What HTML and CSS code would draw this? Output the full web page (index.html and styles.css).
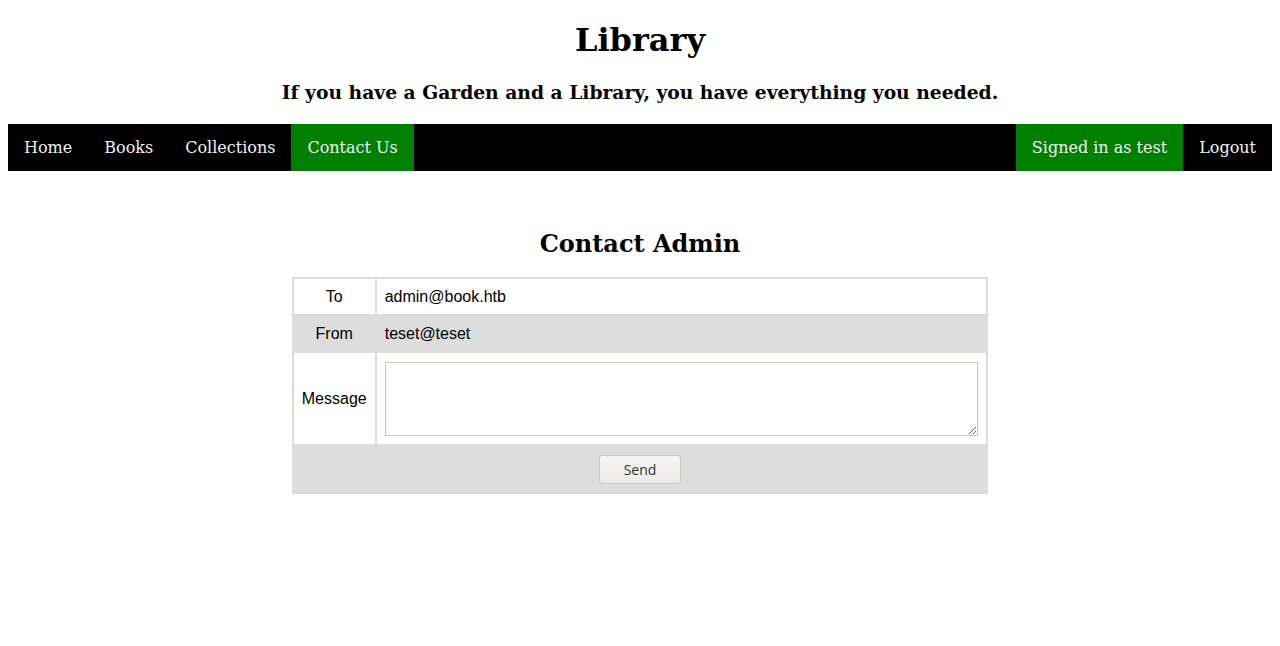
FILE: index.html
```html
<!DOCTYPE html>
<html>
<head>
<meta charset="utf-8">
<title>Library</title>
<link rel="stylesheet" href="styles.css">
</head>
<body>
<header class="masthead">
  <h1 class="title">Library</h1>
  <h3 class="tagline">If you have a Garden and a Library, you have everything you needed.</h3>
</header>
<nav class="topnav">
  <div class="nav-left">
    <a class="nav-link" href="#">Home</a>
    <a class="nav-link" href="#">Books</a>
    <a class="nav-link" href="#">Collections</a>
    <a class="nav-link active" href="#">Contact Us</a>
  </div>
  <div class="nav-right">
    <a class="nav-link active" href="#">Signed in as test</a>
    <a class="nav-link" href="#">Logout</a>
  </div>
</nav>
<main class="content">
  <h2 class="section-title">Contact Admin</h2>
  <form class="contact-form">
    <table class="contact-table">
      <tr>
        <td class="label">To</td>
        <td class="value">admin@book.htb</td>
      </tr>
      <tr class="shaded">
        <td class="label">From</td>
        <td class="value">teset@teset</td>
      </tr>
      <tr>
        <td class="label">Message</td>
        <td class="value"><textarea class="message"></textarea></td>
      </tr>
      <tr class="shaded">
        <td class="actions" colspan="2"><button class="send" type="button">Send</button></td>
      </tr>
    </table>
  </form>
</main>
</body>
</html>
```
FILE: styles.css
```css
body {
  margin: 0 8px 8px;
  font-family: "DejaVu Serif", serif;
  background: #fff;
  color: #000;
}

.masthead {
  text-align: center;
  padding-top: 1px;
}

.title {
  font-size: 32px;
  margin: 20.44px 0 21.44px;
}

.tagline {
  font-size: 18.72px;
  margin: 18.72px 0 20.72px;
}

.topnav {
  display: flex;
  justify-content: space-between;
  background: #000;
}

.nav-left,
.nav-right {
  display: flex;
}

.nav-link {
  display: block;
  color: #f2f2f2;
  text-decoration: none;
  font-size: 16px;
  padding: 14px 16px;
}

.nav-link.active {
  background: #008000;
}

.content {
  padding-top: 38px;
}

.section-title {
  text-align: center;
  font-size: 24px;
  margin: 19.92px 0;
}

.contact-table {
  width: 55.1%;
  margin: 0 auto;
  border-collapse: collapse;
  border: 2px solid #ddd;
  font-family: "Liberation Sans", Arial, sans-serif;
  font-size: 16px;
}

.contact-table td {
  border: 2px solid #ddd;
  padding: 8.5px 8px;
}

.contact-table .label {
  text-align: center;
  width: 1%;
  white-space: nowrap;
}

.contact-table .value {
  text-align: left;
}

.shaded {
  background: #ddd;
}

.message {
  display: block;
  box-sizing: border-box;
  width: 100%;
  height: 74px;
  border: 1px solid #c9c5c0;
  margin: 0;
}

.actions {
  text-align: center;
}

.send {
  font-family: "Open Sans", "Noto Sans", sans-serif;
  font-size: 14px;
  color: #2e3436;
  padding: 4px 24px;
  height: 29px;
  border: 1px solid #cdc7c2;
  border-radius: 3px;
  background: linear-gradient(#f6f5f4, #edebe9);
}
```
